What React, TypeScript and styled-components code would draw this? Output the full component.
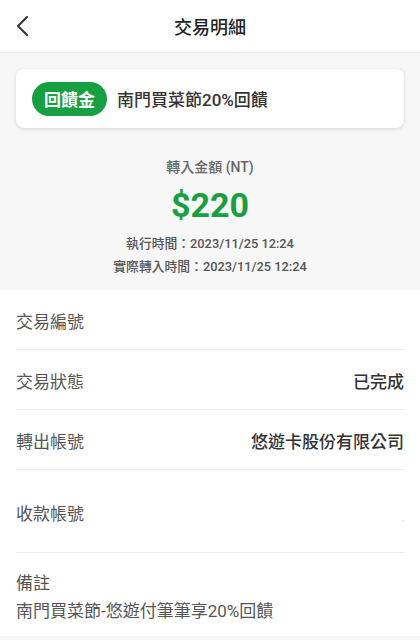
import * as React from "react";
import styled, { createGlobalStyle } from "styled-components";

const GlobalStyle = createGlobalStyle`
    body {
        margin: 0;
        background: #ffffff;
        font-family: Roboto, "Noto Sans CJK TC", sans-serif;
    }
`;

const Page = styled.div`
    width: 420px;
    min-height: 640px;
    background: #f7f7f7;
    display: flex;
    flex-direction: column;
`;

const Header = styled.header`
    height: 52px;
    background: #ffffff;
    border-bottom: 1px solid #e6e6e6;
    display: grid;
    grid-template-columns: 52px 1fr 52px;
    align-items: center;
`;

const BackButton = styled.button`
    border: none;
    background: none;
    padding: 0 0 0 14px;
    height: 52px;
    display: flex;
    align-items: center;
    cursor: pointer;
`;

const Title = styled.h1`
    margin: 0;
    text-align: center;
    font-size: 18px;
    font-weight: 500;
    color: #222222;
`;

const Summary = styled.section`
    padding: 16px 16px 12px;
    display: flex;
    flex-direction: column;
    align-items: center;
`;

const PromoCard = styled.div`
    align-self: stretch;
    height: 59px;
    box-sizing: border-box;
    background: #ffffff;
    border-radius: 8px;
    box-shadow: 0 1px 4px rgba(0, 0, 0, 0.14);
    padding: 0 16px;
    display: flex;
    align-items: center;
    gap: 10px;
`;

const Badge = styled.span`
    height: 34px;
    padding: 0 12px;
    border-radius: 17px;
    background: #17a03f;
    color: #ffffff;
    font-size: 17px;
    font-weight: 700;
    display: flex;
    align-items: center;
`;

const PromoText = styled.span`
    font-size: 17px;
    font-weight: 500;
    color: #333333;
`;

const AmountLabel = styled.div`
    margin-top: 29px;
    font-size: 14px;
    line-height: 20px;
    font-weight: 500;
    color: #666666;
`;

const Amount = styled.div`
    font-size: 34px;
    line-height: 44px;
    font-weight: 700;
    color: #17a03f;
    margin: 6px 0 5px;
`;

const TimeLine = styled.div`
    font-size: 12.8px;
    line-height: 23px;
    font-weight: 500;
    color: #555555;
`;

const Details = styled.section`
    background: #ffffff;
`;

const Row = styled.div<{ $tall?: boolean }>`
    margin: 0 16px;
    min-height: ${({ $tall }) => ($tall ? 83 : 60)}px;
    box-sizing: border-box;
    border-bottom: 1px solid #ececec;
    display: flex;
    align-items: center;
    justify-content: space-between;
    padding-top: 2px;
`;

const Label = styled.span`
    font-size: 17px;
    color: #555555;
`;

const Value = styled.span`
    font-size: 17px;
    font-weight: 500;
    color: #333333;
    text-align: right;
`;

const BlankLines = styled.div`
    display: flex;
    flex-direction: column;
    align-items: flex-end;
    line-height: 20px;
    font-size: 10px;
    color: #d8d8d8;
`;

const NoteRow = styled.div`
    margin: 0 16px;
    padding: 18px 0 13px;
    display: flex;
    flex-direction: column;
    gap: 4px;
`;

const NoteLine = styled.span`
    font-size: 17px;
    line-height: 24px;
    color: #555555;
`;

const ChevronLeft = () => (
    <svg width="16" height="22" viewBox="0 0 16 22" fill="none">
        <path
            d="M13 2 L4 11 L13 20"
            stroke="#333333"
            strokeWidth="2"
            strokeLinecap="round"
            strokeLinejoin="round"
        />
    </svg>
);

const rows = [
    { label: "交易編號", value: "" },
    { label: "交易狀態", value: "已完成" },
    { label: "轉出帳號", value: "悠遊卡股份有限公司" },
];

export default function App() {
    return (
        <>
            <GlobalStyle />
            <Page>
                <Header>
                    <BackButton aria-label="back">
                        <ChevronLeft />
                    </BackButton>
                    <Title>交易明細</Title>
                    <span />
                </Header>
                <Summary>
                    <PromoCard>
                        <Badge>回饋金</Badge>
                        <PromoText>南門買菜節20%回饋</PromoText>
                    </PromoCard>
                    <AmountLabel>轉入金額 (NT)</AmountLabel>
                    <Amount>$220</Amount>
                    <TimeLine>執行時間：2023/11/25 12:24</TimeLine>
                    <TimeLine>實際轉入時間：2023/11/25 12:24</TimeLine>
                </Summary>
                <Details>
                    {rows.map(({ label, value }) => (
                        <Row key={label}>
                            <Label>{label}</Label>
                            <Value>{value}</Value>
                        </Row>
                    ))}
                    <Row $tall>
                        <Label>收款帳號</Label>
                        <BlankLines>
                            <span>&nbsp;</span>
                            <span>·</span>
                        </BlankLines>
                    </Row>
                    <NoteRow>
                        <NoteLine>備註</NoteLine>
                        <NoteLine>南門買菜節-悠遊付筆筆享20%回饋</NoteLine>
                    </NoteRow>
                </Details>
            </Page>
        </>
    );
}
